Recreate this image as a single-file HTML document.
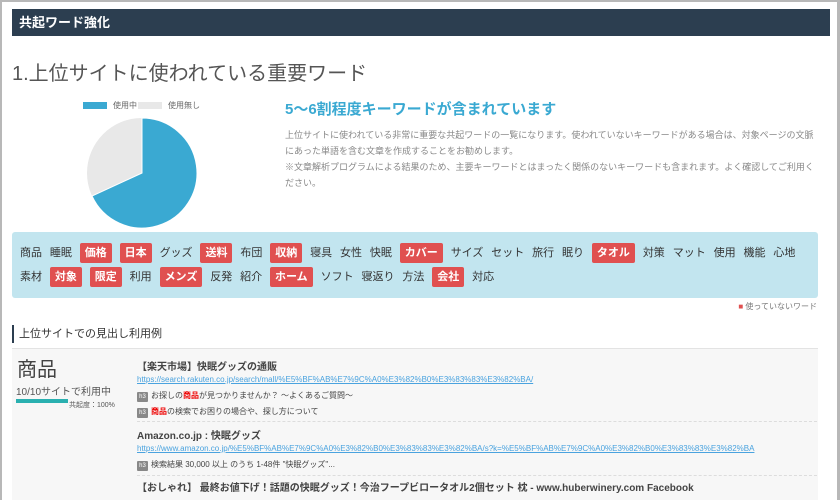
<!DOCTYPE html>
<html><head><meta charset="utf-8">
<style>
*{margin:0;padding:0;box-sizing:border-box}
body{width:840px;height:500px;overflow:hidden;background:#fff;font-family:"Liberation Sans","Noto Sans CJK JP",sans-serif;color:#333;position:relative}
.frame{position:absolute;left:0;top:0;width:840px;height:500px;border:2px solid #b8b8b8;border-right-width:3px;border-bottom:none}
.hdr{position:absolute;left:12px;top:9px;width:818px;height:27px;background:#2c3e50;color:#fff;font-size:13px;font-weight:bold;line-height:27px;padding-left:7px}
h1{position:absolute;left:12px;top:57px;font-size:20px;font-weight:normal;color:#555}
.leg{position:absolute;top:101px;font-size:8px;color:#666;line-height:10px}
.leg i{display:inline-block;width:24px;height:7px;vertical-align:middle;margin-right:6px}
.h2{position:absolute;left:285px;top:98px;font-size:15px;font-weight:bold;color:#3aa9d2}
.desc{position:absolute;left:285px;top:127px;width:530px;font-size:9px;line-height:16px;color:#888}
.kw{position:absolute;left:12px;top:232px;width:806px;height:66px;background:#c2e5ef;border-radius:3px;padding:11px 0 0 8px;font-size:11px;color:#333}
.kw div{height:24px;line-height:20px;white-space:nowrap}
.kw span{display:inline-block;margin-right:7.9px}
.kw span.r{background:#e05050;color:#fff;font-weight:bold;border-radius:2px;padding:0 5px}
.note{position:absolute;right:23px;top:301px;font-size:8px;color:#777}
.note b{color:#e05050}
.sec{position:absolute;left:12px;top:325px;border-left:2px solid #2c3e50;padding-left:5px;font-size:11px;line-height:18px;color:#333}
.box{position:absolute;left:12px;top:348px;width:806px;height:152px;background:#f7f7f7;border-top:1px solid #e3e3e3}
.big{position:absolute;left:5px;top:4px;font-size:20px;color:#444}
.use{position:absolute;left:4px;top:34px;font-size:10px;color:#555}
.bar{position:absolute;left:4px;top:50px;width:52px;height:4px;background:#2ab0b0}
.pct{position:absolute;left:57px;top:51px;font-size:7px;color:#555}
.it{position:absolute;left:125px;width:680px;font-size:9px;color:#444}
.it .t{font-weight:bold;font-size:10px;color:#444;display:block;line-height:12px}
.it a{color:#4aa3df;text-decoration:underline;font-size:8px;display:block;margin-top:0;line-height:12px;white-space:nowrap}
.it p{margin-top:4px;font-size:8px;line-height:12px}
.it p i{display:inline-block;background:#888;color:#fff;font-style:normal;font-size:6px;width:11px;height:10px;line-height:10px;text-align:center;margin-right:3px;border-radius:1px}
.it p b{color:#e00}
.sep{position:absolute;left:125px;width:680px;border-top:1px dashed #ddd}
</style></head><body>
<div class="frame"></div>
<div class="hdr">共起ワード強化</div>
<h1>1.上位サイトに使われている重要ワード</h1>
<div class="leg" style="left:83px"><i style="background:#3aa9d2"></i>使用中</div>
<div class="leg" style="left:138px"><i style="background:#e8e8e8"></i>使用無し</div>
<svg style="position:absolute;left:86px;top:117px" width="112" height="112" viewBox="0 0 112 112">
<circle cx="56" cy="56" r="55" fill="#e8e8e8"/>
<path d="M56 56 L56 1 A55 55 0 1 1 6 79 Z" fill="#3aa9d2" stroke="#fff" stroke-width="1"/>
</svg>
<div class="h2">5〜6割程度キーワードが含まれています</div>
<div class="desc">上位サイトに使われている非常に重要な共起ワードの一覧になります。使われていないキーワードがある場合は、対象ページの文脈にあった単語を含む文章を作成することをお勧めします。<br>※文章解析プログラムによる結果のため、主要キーワードとはまったく関係のないキーワードも含まれます。よく確認してご利用ください。</div>
<div class="kw">
<div><span>商品</span><span>睡眠</span><span class="r">価格</span><span class="r">日本</span><span>グッズ</span><span class="r">送料</span><span>布団</span><span class="r">収納</span><span>寝具</span><span>女性</span><span>快眠</span><span class="r">カバー</span><span>サイズ</span><span>セット</span><span>旅行</span><span>眠り</span><span class="r">タオル</span><span>対策</span><span>マット</span><span>使用</span><span>機能</span><span>心地</span></div>
<div><span>素材</span><span class="r">対象</span><span class="r">限定</span><span>利用</span><span class="r">メンズ</span><span>反発</span><span>紹介</span><span class="r">ホーム</span><span>ソフト</span><span>寝返り</span><span>方法</span><span class="r">会社</span><span>対応</span></div>
</div>
<div class="note"><b>■</b> 使っていないワード</div>
<div class="sec">上位サイトでの見出し利用例</div>
<div class="box">
<div class="big">商品</div>
<div class="use">10/10サイトで利用中</div>
<div class="bar"></div>
<div class="pct">共起度：100%</div>
<div class="it" style="top:13px"><span class="t">【楽天市場】快眠グッズの通販</span><a>https://search.rakuten.co.jp/search/mall/%E5%BF%AB%E7%9C%A0%E3%82%B0%E3%83%83%E3%82%BA/</a><p><i>h3</i>お探しの<b>商品</b>が見つかりませんか？ 〜よくあるご質問〜</p><p><i>h3</i><b>商品</b>の検索でお困りの場合や、探し方について</p></div>
<div class="sep" style="top:72px"></div>
<div class="it" style="top:82px"><span class="t">Amazon.co.jp : 快眠グッズ</span><a>https://www.amazon.co.jp/%E5%BF%AB%E7%9C%A0%E3%82%B0%E3%83%83%E3%82%BA/s?k=%E5%BF%AB%E7%9C%A0%E3%82%B0%E3%83%83%E3%82%BA</a><p><i>h3</i>検索結果 30,000 以上 のうち 1-48件 "快眠グッズ"...</p></div>
<div class="sep" style="top:126px"></div>
<div class="it" style="top:134px"><span class="t">【おしゃれ】 最終お値下げ！話題の快眠グッズ！今治フープビロータオル2個セット 枕 - www.huberwinery.com Facebook</span></div>
</div>
</body></html>
